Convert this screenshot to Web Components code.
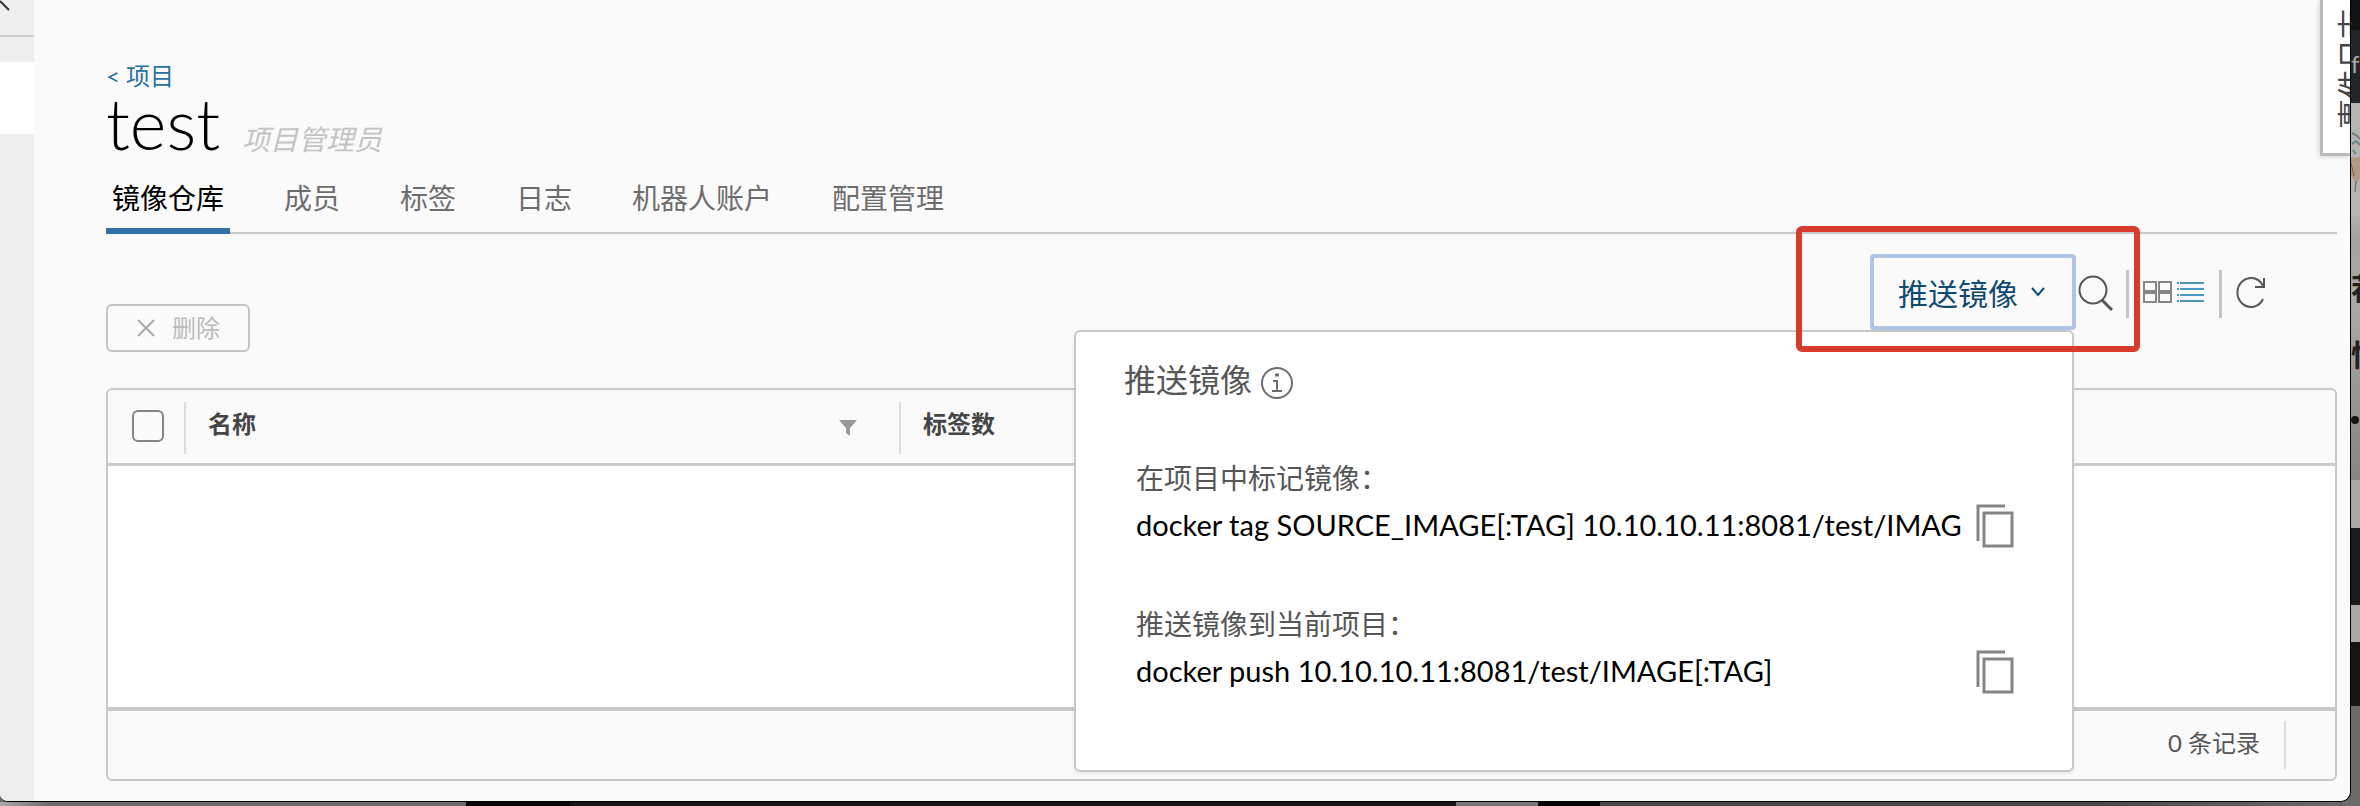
<!DOCTYPE html>
<html lang="zh-CN">
<head>
<meta charset="utf-8">
<title>test - 镜像仓库</title>
<style>
body { margin: 0; background: #6b6b6b; font-family: Lato, "Noto Sans CJK SC", sans-serif; color: #565656; }
</style>
</head>
<body>
<desktop-frame>
  <side-rail></side-rail>
  <project-page></project-page>
</desktop-frame>
<script>
const define = (name, html, setup) => {
  const tpl = document.createElement('template');
  tpl.innerHTML = '<style>*{box-sizing:border-box}button,input{font:inherit;color:inherit}svg{display:block}</style>' + html;
  customElements.define(name, class extends HTMLElement {
    constructor() {
      super();
      this.attachShadow({ mode: 'open' }).append(tpl.content.cloneNode(true));
      if (setup) setup(this, this.shadowRoot);
    }
  });
};

define('desktop-frame', `
<style>
:host { display: grid; grid-template-columns: minmax(0, 1fr) 9px; grid-template-rows: 1fr 5px; min-height: 100vh; overflow: hidden; }
.window { position: relative; display: flex; overflow: hidden; background: #fafafa; border: solid #000; border-width: 0 1px 1px 0; border-radius: 0 0 10px 8px; }
.right { position: relative; overflow: hidden; color: #222;
  background: linear-gradient(#111416 0 30px, #232628 30px 103px, #b4b4b4 103px 215px, #a2a2a2 236px, #aaa 300px, #858585 480px, #aaa 480px 528px, #181a1c 528px 605px, #aaa 605px 642px, #151515 642px 706px, #6b6b6b 706px); }
.right span { position: absolute; left: 0; }
.f { top: 48px; font-size: 24px; line-height: 32px; color: #aaa; }
.c { width: 9px; overflow: hidden; white-space: nowrap; font-size: 30px; font-weight: 700; line-height: 36px; }
.c1 { top: 270px; }
.c2 { top: 336px; }
.dot { top: 416px; width: 8px; height: 8px; border-radius: 50%; background: #151515; }
.pic { position: absolute; left: 0; top: 130px; }
.bottom { grid-column: 1 / -1;
  background: linear-gradient(90deg, #aaa 0, #6b6b6b 50px, #6b6b6b 466px, #060606 466px 570px, #151515 570px 1456px, #777 1456px 1538px, #050505 1538px 1600px, #4a4a4a 1600px 2100px, #6b6b6b); }
</style>
<div class="window"><slot></slot></div>
<div class="right">
  <span class="f">f</span>
  <svg class="pic" width="9" height="64" viewBox="0 0 9 64" fill="none"><path d="M1 3l4 2 4 4M1 14l4-3 4 4M2 20l3 4" stroke="#6e8482" stroke-width="2"/><path d="M0 28l9-1v20l-3 7-6-8z" fill="#b39885"/><path d="M5 51l-1 11M0 33l3 13" stroke="#715a50"/></svg>
  <span class="c c1">荐</span>
  <span class="c c2">性</span>
  <span class="dot"></span>
</div>
<div class="bottom"></div>`);

define('side-rail', `
<style>
:host { display: block; flex: none; width: 34px; background: #eee; }
.top { height: 37px; border-bottom: 2px solid #ccc; }
.active { height: 72px; margin-top: 25px; background: #fff; }
</style>
<div class="top"><svg width="12" height="12" viewBox="0 0 12 12"><path d="M0 1l9 9" stroke="#333" stroke-width="2"/></svg></div>
<div class="active"></div>`);

define('project-page', `
<style>
:host { display: block; flex: 1; min-width: 0; padding: 60px 13px 20px 72px; }
.title { display: flex; align-items: baseline; height: 82px; gap: 22px; }
h1 { margin: 0; font-size: 70px; font-weight: 300; line-height: 62px; color: #000; }
i { font-size: 28px; line-height: 32px; color: #c4c4c4; }
.crumb { display: block; font-size: 24px; line-height: 32px; color: #2b71a0; text-decoration: none; }
.bar { display: flex; justify-content: space-between; min-height: 98px; margin: 20px 0 36px; }
delete-button { align-self: flex-end; }
</style>
<a class="crumb" href="#">&lt; 项目</a>
<div class="title"><h1>test</h1><i>项目管理员</i></div>
<tab-bar></tab-bar>
<div class="bar"><delete-button></delete-button><repo-tools></repo-tools></div>
<repo-table></repo-table>
<event-log></event-log>`);

define('tab-bar', `
<style>
:host { display: block; }
nav { display: flex; gap: 48px; box-shadow: inset 0 -2px #c8c8c8; }
a { padding: 0 6px 6px; border-bottom: 6px solid transparent; font-size: 28px; line-height: 48px; color: #6d6d6d; text-decoration: none; white-space: nowrap; }
a.on { color: #000; border-color: #3072a5; }
</style>
<nav><a class="on" href="#">镜像仓库</a><a href="#">成员</a><a href="#">标签</a><a href="#">日志</a><a href="#">机器人账户</a><a href="#">配置管理</a></nav>`);

define('delete-button', `
<style>
:host { display: block; }
button { display: flex; align-items: center; justify-content: center; gap: 16px; width: 144px; height: 48px; padding: 0; border: 2px solid #c4c4c4; border-radius: 6px; background: transparent; color: #bbb; font-size: 24px; line-height: 32px; }
</style>
<button type="button" disabled><svg width="20" height="20" viewBox="0 0 20 20"><path d="M2 2l16 16M18 2L2 18" stroke="#aaa" stroke-width="2"/></svg>删除</button>`);

define('repo-tools', `
<style>
:host { display: flex; align-items: flex-start; padding-right: 70px; }
button { flex: none; display: flex; padding: 0; border: 0; background: none; }
.sep { flex: none; width: 3px; height: 48px; margin-top: 16px; background: #c4c4c4; }
.search { margin: 20px 13px 0 0; }
.grid { margin: 26px 5px 0 14px; }
.list { margin: 26px 15px 0 0; }
.refresh { margin: 20px 0 0 12px; }
</style>
<push-menu></push-menu>
<button class="search" aria-label="搜索"><svg width="37" height="40" viewBox="0 0 37 40" fill="none" stroke="#565656" stroke-width="2"><circle cx="17" cy="16" r="13.5"/><path d="M26 26l10 10" stroke-width="3"/></svg></button>
<span class="sep"></span>
<button class="grid" aria-label="卡片"><svg width="29" height="24" viewBox="0 0 29 24" fill="none" stroke="#858585" stroke-width="2"><rect x="1" y="2" width="12" height="9"/><rect x="16" y="2" width="12" height="9"/><rect x="1" y="13" width="12" height="9"/><rect x="16" y="13" width="12" height="9"/></svg></button>
<button class="list" aria-label="列表"><svg width="27" height="24" viewBox="0 0 27 24" stroke="#4c97c2" stroke-width="2"><path d="M0 3h2M3 3h24M0 9h2M3 9h24M0 15h2M3 15h24M0 21h2M3 21h24"/></svg></button>
<span class="sep"></span>
<button class="refresh" aria-label="刷新"><svg width="33" height="36" viewBox="0 0 33 36" fill="none" stroke="#565656" stroke-width="2"><path d="M29 12A13.5 14.5 0 1 0 29 25M30 4v9H21"/></svg></button>`);

define('push-menu', `
<style>
:host { display: block; position: relative; flex: none; }
.open { display: flex; align-items: center; gap: 12px; width: 206px; height: 76px; padding: 2px 0 0 24px; border: 4px solid #b2c4e6; border-radius: 4px; background: #fafafa; color: #0f4a70; font-size: 30px; line-height: 40px; white-space: nowrap; position: relative; z-index: 2; }
.mark { position: absolute; z-index: 3; top: -28px; right: -64px; bottom: -22px; left: -74px; border: 6px solid #d73b2b; border-radius: 6px; pointer-events: none; }
push-popover { position: absolute; z-index: 1; top: 100%; right: 2px; width: 1000px; }
</style>
<button class="open" type="button" aria-expanded="true">推送镜像<svg width="16" height="12" viewBox="0 0 16 12" fill="none"><path d="M2 1l6 7 6-7" stroke="#0f4a70" stroke-width="2"/></svg></button>
<push-popover></push-popover>
<div class="mark"></div>`);

define('push-popover', `
<style>
:host { display: block; padding: 28px 58px 76px 48px; background: #fff; border: 2px solid #c8c8c8; border-radius: 6px; box-shadow: 0 2px 4px #0001; }
h2 { display: flex; align-items: center; gap: 8px; margin: 0 0 60px; font-size: 32px; line-height: 40px; font-weight: 400; }
h2 svg { margin-top: 6px; }
copy-field { margin: 0 0 58px 12px; }
copy-field:last-child { margin-bottom: 0; }
</style>
<h2>推送镜像<svg width="34" height="34" viewBox="0 0 34 34" fill="none" stroke="#6d6d6d" stroke-width="2"><circle cx="17" cy="17" r="15"/><path d="M13 15h4v10M12 25h10"/><path d="M15 9h4" stroke-width="3"/></svg></h2>
<copy-field label="在项目中标记镜像：" value="docker tag SOURCE_IMAGE[:TAG] 10.10.10.11:8081/test/IMAGE[:TAG]"></copy-field>
<copy-field label="推送镜像到当前项目：" value="docker push 10.10.10.11:8081/test/IMAGE[:TAG]"></copy-field>`);

define('copy-field', `
<style>
:host { display: block; }
label { display: block; font-size: 28px; line-height: 36px; }
.row { display: flex; align-items: flex-start; gap: 14px; margin-top: 6px; }
input { flex: 1; min-width: 0; height: 44px; margin: 0; padding: 0; border: 0; outline: 0; background: none; color: #000; font-size: 29px; line-height: 36px; }
button { flex: none; height: 46px; padding: 2px 0 0; border: 0; background: none; }
</style>
<label for="v"></label>
<div class="row"><input id="v" readonly><button type="button" aria-label="复制"><svg width="38" height="44" viewBox="0 0 38 44" fill="none" stroke="#858585" stroke-width="3"><path d="M2 37V2h27"/><rect x="8" y="9" width="28" height="33"/></svg></button></div>`,
(host, root) => {
  root.querySelector('label').textContent = host.getAttribute('label');
  root.querySelector('input').setAttribute('value', host.getAttribute('value'));
});

define('repo-table', `
<style>
:host { display: block; border: 2px solid #c8c8c8; border-radius: 6px; overflow: hidden; }
table { width: 100%; table-layout: fixed; border-collapse: separate; border-spacing: 0; font-size: 24px; line-height: 32px; }
th, td { padding: 0; }
th { height: 76px; text-align: left; color: #454545; border-bottom: 3px solid #ccc; vertical-align: top; }
.cell { display: flex; justify-content: space-between; align-items: flex-start; height: 52px; margin-top: 12px; padding: 6px 42px 0 22px; border-left: 2px solid #ddd; }
.cell svg { margin-top: 12px; }
.check { width: 76px; }
.name { width: 715px; }
input { appearance: none; display: block; width: 32px; height: 32px; margin: 20px 0 0 24px; border: 2px solid #858585; border-radius: 6px; background: #fafafa; }
tbody td { height: 241px; background: #fff; }
tfoot td { height: 72px; border-top: 4px solid #c8c8c8; }
.foot { display: flex; align-items: center; justify-content: flex-end; height: 48px; margin-right: 49px; padding: 0 24px 4px 0; border-right: 2px solid #ddd; }
</style>
<table>
<thead><tr>
<th class="check"><input type="checkbox" aria-label="全选"></th>
<th class="name"><div class="cell">名称<svg width="18" height="16" viewBox="0 0 18 16"><path d="M0 0h18l-7 8v8l-4-3V8z" fill="#999"/></svg></div></th>
<th><div class="cell">标签数</div></th>
</tr></thead>
<tbody><tr><td colspan="3"></td></tr></tbody>
<tfoot><tr><td colspan="3"><div class="foot">0 条记录</div></td></tr></tfoot>
</table>`);

define('event-log', `
<style>
:host { display: block; position: absolute; top: 0; right: 0; width: 30px; height: 156px; overflow: hidden; background: #fff; border: solid #bbb; border-width: 0 0 3px 3px; box-shadow: 0 0 6px #0003; }
button { display: block; padding: 0; margin: 9px 0 0 8px; border: 0; background: none; writing-mode: vertical-rl; text-orientation: sideways; transform: rotate(180deg); font-size: 30px; line-height: 40px; color: #454545; }
</style>
<button type="button">事件日志</button>`);
</script>
</body>
</html>
